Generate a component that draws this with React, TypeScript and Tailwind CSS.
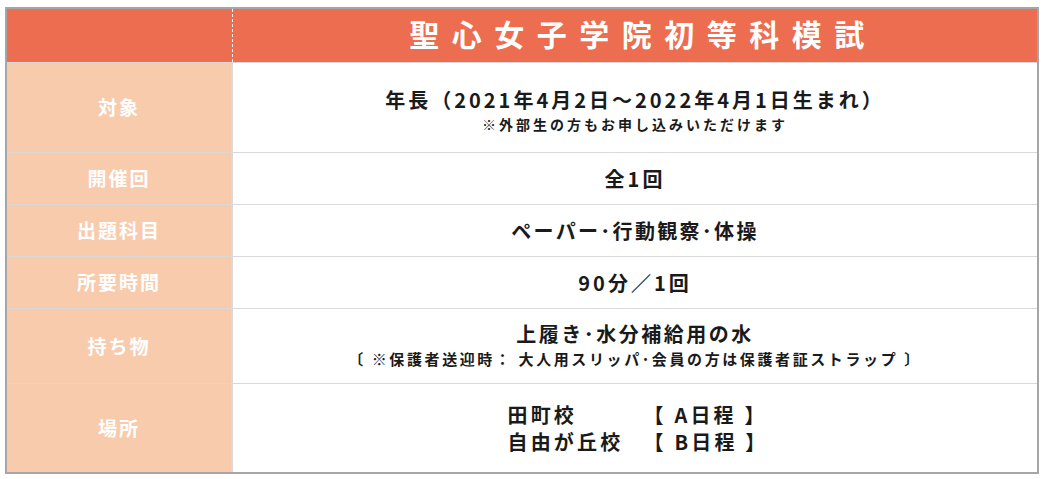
import React from "react";

const font = { fontFamily: '"Noto Sans CJK JP", "Noto Sans", sans-serif' };

function Row({
  label,
  h,
  children,
}: {
  label: string;
  h: string;
  children: React.ReactNode;
}) {
  return (
    <div className={`flex border-t border-[#d9d9d9] ${h}`}>
      <div className="w-[226px] shrink-0 bg-[#f8cbad] border-r-2 border-[#d9d9d9] flex items-center justify-center text-white font-bold text-[19px] tracking-[2px]">
        {label}
      </div>
      <div className="flex-1 flex flex-col items-center justify-center text-[#1a1a1a] font-bold">
        {children}
      </div>
    </div>
  );
}

export default function App() {
  return (
    <div className="w-[1045px] h-[479px] bg-white pt-[7px] pl-[5px]" style={font}>
      <div className="w-[1034px] h-[467px] border-2 border-[#a6a6a6] flex flex-col">
        <div className="flex h-[53px] bg-[#ec6d4f]">
          <div className="w-[226px] shrink-0 border-r border-dashed border-[#f2f2f2]" />
          <div className="flex-1 flex items-center justify-center text-white font-bold text-[30px] tracking-[12.5px] pl-[16px] pb-[4px]">
            聖心女子学院初等科模試
          </div>
        </div>
        <Row label="対象" h="h-[90px]">
          <div className="text-[20px] tracking-[3px] leading-[24px] pt-[8px]">
            年長（2021年4月2日～2022年4月1日生まれ）
          </div>
          <div className="text-[14px] tracking-[3px] leading-[24px]">
            ※外部生の方もお申し込みいただけます
          </div>
        </Row>
        <Row label="開催回" h="h-[52px]">
          <div className="text-[20px] tracking-[3px]">全1回</div>
        </Row>
        <Row label="出題科目" h="h-[52px]">
          <div className="text-[20px] tracking-[2.3px]">ペーパー･行動観察･体操</div>
        </Row>
        <Row label="所要時間" h="h-[52px]">
          <div className="text-[20px] tracking-[3px]">90分／1回</div>
        </Row>
        <Row label="持ち物" h="h-[75px]">
          <div className="text-[20px] tracking-[2.5px] leading-[26px]">上履き･水分補給用の水</div>
          <div className="text-[15px] tracking-[2.6px] leading-[24px]">
            〔 ※保護者送迎時： 大人用スリッパ･会員の方は保護者証ストラップ 〕
          </div>
        </Row>
        <Row label="場所" h="h-[89px]">
          <div className="grid grid-cols-[auto_auto] gap-x-[20px] text-[20px] tracking-[3.2px] leading-[27px] pl-[6px]">
            <div>田町校</div>
            <div>【 A日程 】</div>
            <div>自由が丘校</div>
            <div>【 B日程 】</div>
          </div>
        </Row>
      </div>
    </div>
  );
}
